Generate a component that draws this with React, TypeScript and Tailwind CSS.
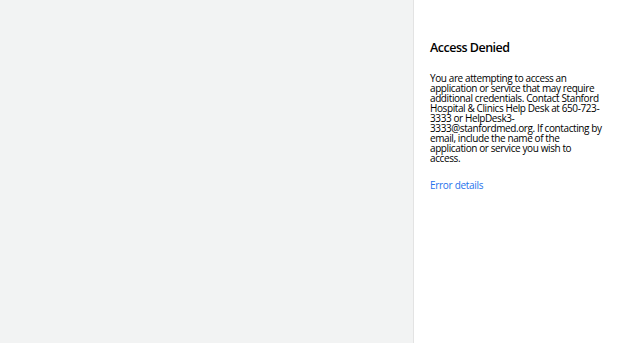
export default function App() {
  return (
    <div className="flex h-[343px] w-[620px] overflow-hidden" style={{ fontFamily: '"Open Sans", "Noto Sans", sans-serif' }}>
      <div className="flex-1 bg-[#f2f3f3]" />
      <div className="w-[207px] shrink-0 border-l border-[#e3e3e3] bg-white pl-[16px] pr-[17px] pt-[40px]">
        <h1 className="text-[12.5px] font-semibold leading-[16px] tracking-[-0.5px] text-black">Access Denied</h1>
        <p className="mt-[17px] text-[10px] leading-[10px] tracking-[-0.4px] text-black">
          You are attempting to access an application or service that may require additional credentials. Contact Stanford Hospital &amp; Clinics Help Desk at 650-723-3333 or HelpDesk3-3333@stanfordmed.org. If contacting by email, include the name of the application or service you wish to access.
        </p>
        <a className="mt-[16px] block text-[10px] leading-[12px] tracking-[-0.3px] text-[#2672ec]">Error details</a>
      </div>
    </div>
  );
}
